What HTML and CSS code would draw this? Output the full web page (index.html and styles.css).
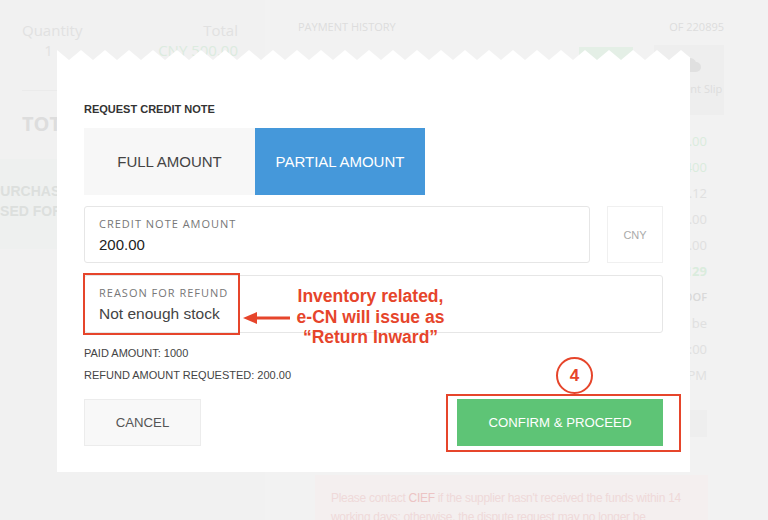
FILE: index.html
```html
<!DOCTYPE html>
<html lang="en">
<head>
  <meta charset="UTF-8" />
  <title>Request Credit Note</title>
  <link rel="stylesheet" href="styles.css">
</head>
<body>

  <div class="page">
    <section class="summary">
      <div class="qty-row"><span class="qty">Quantity</span><span>Total</span></div>
      <div class="qty-row"><span class="qty">1</span><span class="money">CNY 500.00</span></div>
      <div class="total-row">TOTAL</div>
      <div class="status-box">
        <p class="first">PURCHASE ORDER</p>
        <p class="second">PROCESSED FOR PAYMENT</p>
      </div>
    </section>

    <section class="history">
      <div class="history-head"><span>PAYMENT HISTORY</span><span>OF 220895</span></div>
      <div class="slips">
        <span class="paid-badge"></span>
        <div class="slip-card">
          <svg width="26" height="16" viewBox="0 0 26 16"><path d="M7 15h13a5 5 0 0 0 0-10 7 7 0 0 0-13 1 4.5 4.5 0 0 0 0 9z" fill="#e0e0e0"/></svg>
          <span>Payment Slip</span>
        </div>
      </div>
      <ul class="ledger">
        <li class="green">1,500.00</li>
        <li class="green">1,400</li>
        <li>14.12</li>
        <li>500.00</li>
        <li>100.00</li>
        <li class="green strong">1,129</li>
        <li class="small">PROOF</li>
        <li>To be</li>
        <li>10:00</li>
        <li>PM</li>
      </ul>
      <div class="ledger-btn"></div>
      <div class="notice">
        Please contact <span class="cief">CIEF</span> if the supplier hasn't received the funds within 14<br>
        working days; otherwise, the dispute request may no longer be
      </div>
    </section>
  </div>

  <div class="modal">
    <svg class="zigzag" width="633" height="10">
      <defs>
        <pattern id="teeth" width="24" height="10" patternUnits="userSpaceOnUse">
          <path d="M0 0L12 10H0Z M24 0V10H12Z" fill="#fff"/>
        </pattern>
      </defs>
      <rect width="633" height="10" fill="url(#teeth)"/>
    </svg>

    <div class="modal-body">
      <h2 class="modal-title">REQUEST CREDIT NOTE</h2>

      <div class="tabs">
        <button class="tab">FULL AMOUNT</button>
        <button class="tab active">PARTIAL AMOUNT</button>
      </div>

      <div class="amount-row">
        <div class="field">
          <div class="field-label">CREDIT NOTE AMOUNT</div>
          <div class="field-value">200.00</div>
        </div>
        <div class="currency">CNY</div>
      </div>

      <div class="field reason">
        <div class="field-label">REASON FOR REFUND</div>
        <div class="field-value">Not enough stock</div>
      </div>

      <div class="info">
        <div>PAID AMOUNT: 1000</div>
        <div>REFUND AMOUNT REQUESTED: 200.00</div>
      </div>

      <div class="actions">
        <button class="btn-cancel">CANCEL</button>
        <button class="btn-confirm">CONFIRM &amp; PROCEED</button>
      </div>
    </div>

    <!-- annotations -->
    <div class="mark mark-reason"></div>
    <svg class="arrow" width="48" height="16" viewBox="0 0 48 16">
      <path d="M12 8H47" stroke="#e6452b" stroke-width="3"/>
      <path d="M0 8L14 2V14Z" fill="#e6452b"/>
    </svg>
    <div class="callout">Inventory related,<br>e-CN will issue as<br>“Return Inward”</div>
    <div class="step">4</div>
    <div class="mark mark-confirm"></div>
  </div>

</body>
</html>
```

FILE: styles.css
```css
body {
  margin: 0;
  background-color: #f2f2f2;
  font-family: "Liberation Sans", Arial, sans-serif;
  position: relative;
  height: 520px;
  overflow: hidden;
}
.page {
  display: grid;
  grid-template-columns: 265px 1fr;
  height: 520px;
}

/* faded page behind the dialog */
.summary {
  padding: 20px 27px 0 22px;
  font-family: "Open Sans", sans-serif;
  color: #e1e1e1;
  background-color: #f1f1f1;
}
.qty-row {
  display: flex;
  justify-content: space-between;
  font-size: 15px;
  line-height: 20px;
}
.qty-row .qty {
  width: 53px;
  text-align: center;
}
.money {
  color: #dcebdf;
}
.total-row {
  margin-top: 30px;
  border-top: 1px solid #ebebeb;
  padding-top: 21px;
  font-size: 20px;
  line-height: 24px;
  font-weight: bold;
  color: #dddddd;
}
.status-box {
  margin: 23px -27px 0 -22px;
  height: 90px;
  box-sizing: border-box;
  padding-top: 22px;
  background-color: #eef0ef;
  font-family: "Liberation Sans", Arial, sans-serif;
  font-weight: bold;
  font-size: 14px;
  line-height: 20px;
  color: #dcdfdd;
  white-space: nowrap;
}
.status-box p {
  margin: 0;
}
.status-box .first {
  margin-left: -9px;
}
.status-box .second {
  margin-left: -59px;
}

.history {
  padding: 19px 44px 0 33px;
  font-family: "Open Sans", sans-serif;
  color: #dddddd;
}
.history-head {
  display: flex;
  justify-content: space-between;
  font-size: 11px;
  line-height: 16px;
}
.slips {
  display: flex;
  justify-content: flex-end;
  margin-top: 10px;
  height: 70px;
}
.paid-badge {
  width: 54px;
  height: 22px;
  margin: 2px 21px 0 0;
  background-color: #e4efe6;
}
.slip-card {
  width: 70px;
  background-color: #eeeeee;
  display: flex;
  flex-direction: column;
  align-items: center;
  padding-top: 12px;
  box-sizing: border-box;
  font-size: 11px;
  white-space: nowrap;
}
.slip-card span {
  margin-top: 8px;
}
.ledger {
  list-style: none;
  margin: 13px 0 0;
  padding: 0 17px 0 0;
  text-align: right;
  font-size: 13px;
  line-height: 26px;
  color: #e0e0e0;
}
.ledger .green {
  color: #daecdd;
}
.ledger .strong {
  font-weight: bold;
}
.ledger .small {
  font-size: 11px;
  font-weight: 600;
  color: #d9d9d9;
}
.ledger-btn {
  width: 26px;
  height: 27px;
  margin: 22px 17px 0 auto;
  background-color: #eeeeee;
}
.notice {
  margin: 38px 0 0 17px;
  width: 393px;
  box-sizing: border-box;
  padding: 14px 16px;
  height: 60px;
  background-color: #f4efef;
  font-family: "Liberation Sans", Arial, sans-serif;
  font-size: 12px;
  letter-spacing: -0.3px;
  line-height: 19px;
  color: #efd9d9;
  white-space: nowrap;
  overflow: hidden;
}
.notice .cief {
  color: #ecc4c4;
}

/* dialog */
.modal {
  position: absolute;
  left: 57px;
  top: 50px;
  width: 633px;
}
.zigzag {
  display: block;
}
.modal-body {
  background-color: #fff;
  padding: 42px 27px 26px;
}
.modal-title {
  margin: 0;
  font-size: 11px;
  line-height: 14px;
  font-weight: bold;
  color: #333;
}
.tabs {
  display: flex;
  margin-top: 12px;
}
.tab {
  width: 171px;
  height: 67px;
  border: none;
  padding: 0;
  font-family: "Liberation Sans", Arial, sans-serif;
  font-size: 15px;
  color: #444;
  background-color: #f7f7f7;
}
.tab.active {
  width: 170px;
  background-color: #4598da;
  color: #fff;
}
.amount-row {
  display: flex;
  gap: 17px;
  margin-top: 11px;
}
.field {
  flex: 1;
  border: 1px solid #e6e6e6;
  border-radius: 3px;
  padding: 9px 14px 7px;
}
.field-label {
  font-family: "Open Sans", sans-serif;
  font-size: 11px;
  line-height: 16px;
  letter-spacing: 1px;
  color: #777;
}
.field-value {
  margin-top: 3px;
  font-size: 15px;
  line-height: 20px;
  color: #222;
}
.reason {
  margin-top: 12px;
  padding-bottom: 8px;
}
.reason .field-value {
  color: #444;
  font-size: 15.5px;
}
.currency {
  width: 56px;
  box-sizing: border-box;
  border: 1px solid #f0f0f0;
  display: flex;
  align-items: center;
  justify-content: center;
  font-size: 11px;
  color: #aaa;
}
.info {
  margin-top: 9px;
  font-size: 11px;
  line-height: 22px;
  color: #444;
}
.actions {
  display: flex;
  margin-top: 13px;
}
.actions button {
  height: 47px;
  font-family: "Liberation Sans", Arial, sans-serif;
  font-size: 13.2px;
  padding: 0;
  cursor: pointer;
}
.btn-cancel {
  width: 117px;
  background-color: #f8f8f8;
  border: 1px solid #ececec;
  color: #555;
}
.btn-confirm {
  width: 206px;
  margin-left: auto;
  background-color: #5ec476;
  border: none;
  color: #fff;
}

/* red annotations on top of the screenshot */
.mark {
  position: absolute;
  border: 2.5px solid #e6452b;
  box-sizing: border-box;
}
.mark-reason {
  left: 26px;
  top: 223px;
  width: 157px;
  height: 62px;
}
.mark-confirm {
  left: 389px;
  top: 344px;
  width: 235px;
  height: 58px;
}
.arrow {
  position: absolute;
  left: 186px;
  top: 260px;
}
.callout {
  position: absolute;
  left: 233px;
  top: 236px;
  width: 161px;
  text-align: center;
  font-size: 17.5px;
  line-height: 20.5px;
  font-weight: bold;
  color: #e6452b;
  white-space: nowrap;
}
.step {
  position: absolute;
  left: 499px;
  top: 307px;
  width: 37px;
  height: 37px;
  box-sizing: border-box;
  border: 2.5px solid #e6452b;
  border-radius: 50%;
  display: flex;
  align-items: center;
  justify-content: center;
  font-size: 17px;
  font-weight: bold;
  color: #e6452b;
}
```
